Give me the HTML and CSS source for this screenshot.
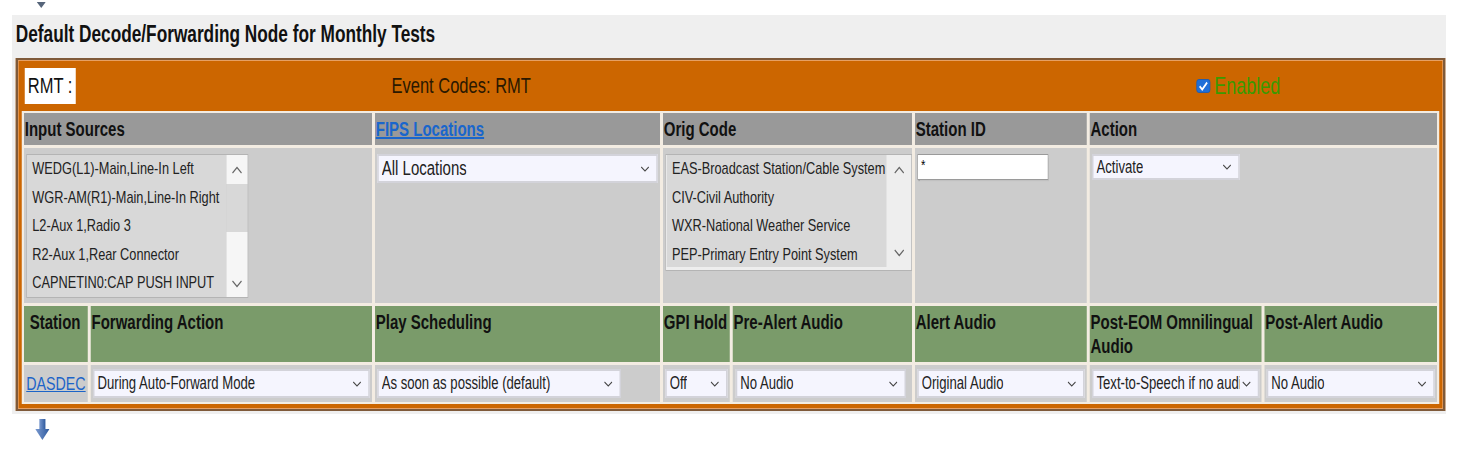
FILE: index.html
```html
<!DOCTYPE html>
<html>
<head>
<meta charset="utf-8">
<title>Decode/Forwarding Nodes</title>
<link rel="stylesheet" href="styles.css">
</head>
<body>
<div class="page">
<div class="toggle"><svg width="12" height="7" viewBox="0 0 12 7"><polygon points="0,0 12,0 6,6" fill="#56657a"/></svg></div>

<div class="panel">
<div class="panel-title">Default Decode/Forwarding Node for Monthly Tests</div>

<div class="node">
<div class="node-head">
<div class="node-name"><span class="rmt">RMT :</span></div>
<div class="node-codes">Event Codes: RMT</div>
<div class="node-enabled"><svg class="check" width="19" height="14" viewBox="0 0 19 14" preserveAspectRatio="none"><rect x="0.5" y="0.5" width="18" height="13" rx="3" fill="#1f6fd8" stroke="#1a5bb4"/><polyline points="4.5,7.2 8,10.5 14.5,3.5" fill="none" stroke="white" stroke-width="2.2"/></svg>Enabled</div>
</div>

<div class="grid">
<div class="th span2">Input Sources</div>
<div class="th"><a href="#fips">FIPS Locations</a></div>
<div class="th span2">Orig Code</div>
<div class="th">Station ID</div>
<div class="th span2">Action</div>

<div class="td span2">
<div class="listbox sources">
<div class="items">
<div>WEDG(L1)-Main,Line-In Left</div>
<div>WGR-AM(R1)-Main,Line-In Right</div>
<div>L2-Aux 1,Radio 3</div>
<div>R2-Aux 1,Rear Connector</div>
<div>CAPNETIN0:CAP PUSH INPUT</div>
</div>
<div class="scroll">
<div class="sb-btn"><svg width="16" height="8" viewBox="0 0 16 8"><polyline points="2,7 8,1.5 14,7" fill="none" stroke="#666" stroke-width="1.6"/></svg></div>
<div class="sb-track"></div>
<div class="sb-thumb"><svg width="16" height="8" viewBox="0 0 16 8"><polyline points="2,1 8,6.5 14,1" fill="none" stroke="#666" stroke-width="1.6"/></svg></div>
</div>
</div>
</div>
<div class="td">
<div class="select fips"><span>All Locations</span><svg class="chev" width="12" height="6" viewBox="0 0 12 6"><polyline points="1,1 6,5 11,1" fill="none" stroke="#444" stroke-width="1.3"/></svg></div>
</div>
<div class="td span2">
<div class="listbox origin">
<div class="items">
<div>EAS-Broadcast Station/Cable System</div>
<div>CIV-Civil Authority</div>
<div>WXR-National Weather Service</div>
<div>PEP-Primary Entry Point System</div>
</div>
<div class="scroll light">
<div class="sb-btn"><svg width="16" height="8" viewBox="0 0 16 8"><polyline points="2,7 8,1.5 14,7" fill="none" stroke="#666" stroke-width="1.6"/></svg></div>
<div class="sb-gap"></div>
<div class="sb-btn"><svg width="16" height="8" viewBox="0 0 16 8"><polyline points="2,1 8,6.5 14,1" fill="none" stroke="#666" stroke-width="1.6"/></svg></div>
</div>
</div>
</div>
<div class="td">
<input class="station-id" type="text" value="*">
</div>
<div class="td span2">
<div class="select action"><span>Activate</span><svg class="chev" width="12" height="6" viewBox="0 0 12 6"><polyline points="1,1 6,5 11,1" fill="none" stroke="#444" stroke-width="1.3"/></svg></div>
</div>

<div class="th2 center">Station</div>
<div class="th2">Forwarding Action</div>
<div class="th2">Play Scheduling</div>
<div class="th2">GPI Hold</div>
<div class="th2">Pre-Alert Audio</div>
<div class="th2">Alert Audio</div>
<div class="th2">Post-EOM Omnilingual Audio</div>
<div class="th2">Post-Alert Audio</div>

<div class="td ctl"><a class="station-link" href="#dasdec">DASDEC</a></div>
<div class="td ctl"><div class="select"><span>During Auto-Forward Mode</span><svg class="chev" width="12" height="6" viewBox="0 0 12 6"><polyline points="1,1 6,5 11,1" fill="none" stroke="#444" stroke-width="1.3"/></svg></div></div>
<div class="td ctl"><div class="select play"><span>As soon as possible (default)</span><svg class="chev" width="12" height="6" viewBox="0 0 12 6"><polyline points="1,1 6,5 11,1" fill="none" stroke="#444" stroke-width="1.3"/></svg></div></div>
<div class="td ctl"><div class="select"><span>Off</span><svg class="chev" width="12" height="6" viewBox="0 0 12 6"><polyline points="1,1 6,5 11,1" fill="none" stroke="#444" stroke-width="1.3"/></svg></div></div>
<div class="td ctl"><div class="select pre-alert"><span>No Audio</span><svg class="chev" width="12" height="6" viewBox="0 0 12 6"><polyline points="1,1 6,5 11,1" fill="none" stroke="#444" stroke-width="1.3"/></svg></div></div>
<div class="td ctl"><div class="select"><span>Original Audio</span><svg class="chev" width="12" height="6" viewBox="0 0 12 6"><polyline points="1,1 6,5 11,1" fill="none" stroke="#444" stroke-width="1.3"/></svg></div></div>
<div class="td ctl"><div class="select"><span>Text-to-Speech if no audio</span><svg class="chev" width="12" height="6" viewBox="0 0 12 6"><polyline points="1,1 6,5 11,1" fill="none" stroke="#444" stroke-width="1.3"/></svg></div></div>
<div class="td ctl"><div class="select"><span>No Audio</span><svg class="chev" width="12" height="6" viewBox="0 0 12 6"><polyline points="1,1 6,5 11,1" fill="none" stroke="#444" stroke-width="1.3"/></svg></div></div>
</div>
</div>
</div>

<div class="down"><svg width="19" height="22" viewBox="0 0 14 22" preserveAspectRatio="none">
<defs><linearGradient id="blue" x1="0" y1="0" x2="1" y2="0"><stop offset="0" stop-color="#7a9ad0"/><stop offset="1" stop-color="#2f5a9e"/></linearGradient></defs>
<rect x="4" y="0" width="6" height="11" fill="url(#blue)"/>
<polygon points="0,10 14,10 7,21" fill="url(#blue)"/>
</svg></div>
</div>
</body>
</html>
```

FILE: styles.css
```css
/* Style sheet for the decode/forwarding node page
   The page is laid out 4/3 wide and squeezed back, as in the capture.
*/

html, body
{ overflow: hidden;
}

body
{ margin: 0;
background-color: white;
color: #111;
font-family: "Liberation Sans", Arial, sans-serif;
}

div.page
{ width: 1950px;
transform: scaleX(0.75);
transform-origin: 0 0;
}

div.toggle
{ height: 15px;
padding-left: 49px;
}

div.toggle svg
{ display: block;
padding-top: 2px;
}

div.panel
{ margin-left: 16px;
width: 1912px;
box-sizing: border-box;
padding: 0 1px 3px 5px;
background-color: #efefef;
}

div.panel-title
{ height: 43px;
line-height: 38px;
font-size: 23px;
font-weight: bold;
}

/* Node box */

div.node
{ border: 2px solid #7f5a3a;
border-left-width: 3px;
border-right-width: 3px;
box-shadow: inset 0 0 0 1px #e6a064;
background-color: #cc6600;
padding: 0 5px 5px 5px;
}

div.node-head
{ display: grid;
grid-template-columns: 493px 1073px auto;
align-items: center;
height: 51px;
}

span.rmt
{ display: inline-block;
margin-left: 4px;
padding: 0 5px 0 4px;
background-color: white;
line-height: 36px;
font-size: 22px;
}

div.node-codes
{ font-size: 22px;
color: #2a1800;
}

div.node-enabled
{ display: flex;
align-items: center;
font-size: 24px;
color: #3a9a00;
}

svg.check
{ margin-right: 5px;
}

/* Settings table */

div.grid
{ display: grid;
grid-template-columns: 85px 375px 380px 89px 239px 229px 229px 230px;
grid-template-rows: 32px 155px 56px 37px;
gap: 3px 4px;
padding: 2px 3px;
background-color: #f3ece2;
}

.span2
{ grid-column: span 2;
}

div.th
{ background-color: #999999;
font-size: 20px;
font-weight: bold;
line-height: 32px;
padding-left: 1px;
}

div.th a
{ color: #1a66cc;
}

div.th2
{ background-color: #7a9b6a;
font-size: 20px;
font-weight: bold;
line-height: 24px;
padding: 4px 3px 0 1px;
}

div.center
{ text-align: center;
}

div.td
{ background-color: #cccccc;
padding: 6px 3px;
}

div.td.ctl
{ padding: 4px 3px 0 3px;
}

/* List boxes */

div.listbox
{ display: flex;
border: 1px solid #b4b4b4;
font-size: 17px;
color: #222;
}

div.listbox div.items
{ flex: 1;
background-color: #d8d8d8;
padding: 0 0 0 7px;
white-space: nowrap;
overflow: hidden;
}

div.listbox div.items div
{ line-height: 28.5px;
}

div.sources
{ width: 296px;
height: 144px;
box-sizing: border-box;
}

div.origin
{ width: 329px;
height: 117px;
box-sizing: border-box;
background-color: #eeeeee;
padding: 0 0 3px 1px;
}

div.scroll
{ display: flex;
flex-direction: column;
width: 28px;
}

div.scroll.light
{ width: 33px;
}

div.sb-btn
{ display: flex;
align-items: center;
justify-content: center;
height: 29px;
background-color: #f6f6f6;
}

div.scroll.light div.sb-btn
{ background-color: transparent;
}

div.sb-track
{ height: 48px;
background-color: #d8d8d8;
}

div.sb-gap
{ flex: 1;
}

div.sb-thumb
{ flex: 1;
display: flex;
align-items: flex-end;
justify-content: center;
padding-bottom: 9px;
background-color: #f6f6f6;
}

/* Drop downs */

div.select
{ display: flex;
align-items: center;
justify-content: space-between;
height: 29px;
box-sizing: border-box;
border: 2px solid #d3d3da;
background-color: #f5f5fe;
padding: 0 9px 0 4px;
font-size: 17.5px;
color: #222;
white-space: nowrap;
overflow: hidden;
}

div.select span
{ overflow: hidden;
}

svg.chev
{ flex: none;
margin-left: 3px;
}

div.fips
{ font-size: 20px;
}

div.action
{ width: 197px;
height: 26px;
}

div.play
{ width: 325px;
}

div.pre-alert
{ width: 227px;
margin-left: 1px;
}

input.station-id
{ display: block;
margin: 0;
width: 175px;
height: 26px;
box-sizing: border-box;
border: 1px solid #9a9a9a;
box-shadow: 1px 1px 1px #aaa;
padding: 0 4px 6px 4px;
font-family: "Liberation Sans", Arial, sans-serif;
font-size: 15px;
}

a.station-link
{ display: block;
font-size: 19px;
line-height: 29px;
color: #1c64c8;
}

div.down
{ padding: 5px 0 0 47px;
}
```
